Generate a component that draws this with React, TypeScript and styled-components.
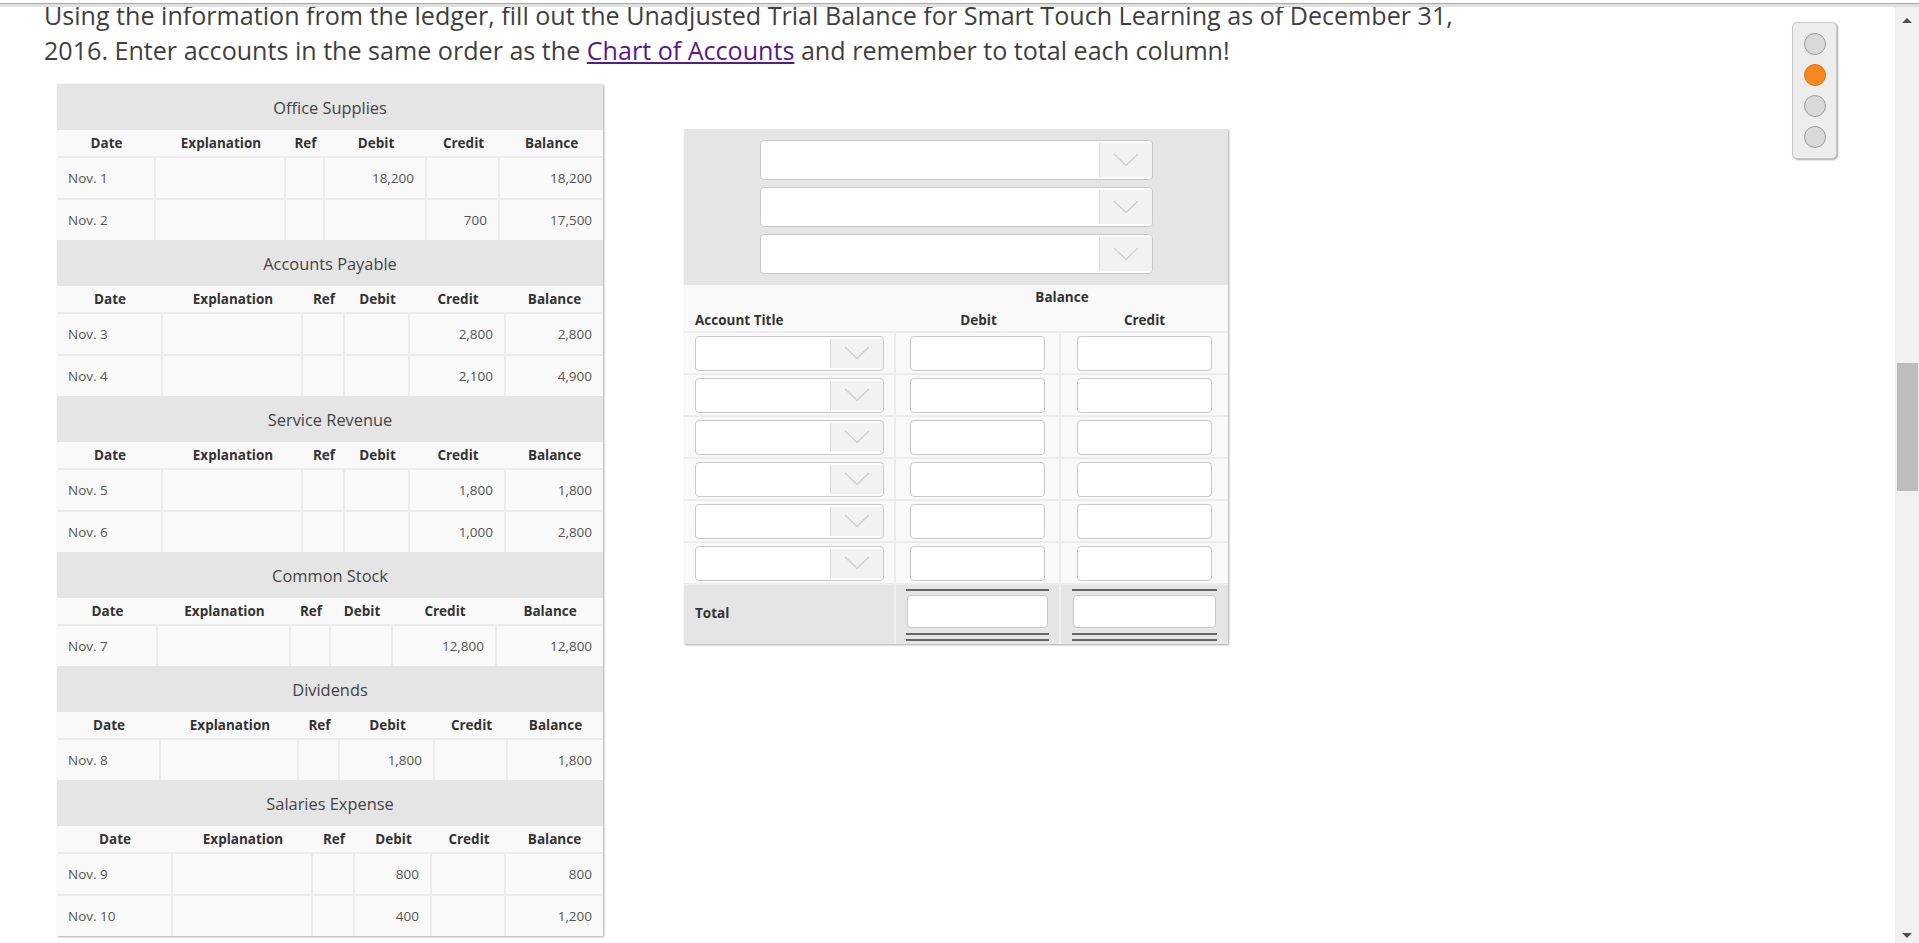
import React from 'react';
import styled, { createGlobalStyle } from 'styled-components';

const GlobalStyle = createGlobalStyle`
  html, body {
    margin: 0;
    padding: 0;
    height: 100%;
    overflow: hidden;
    background: #fff;
  }
  body {
    font-family: 'Open Sans', 'Liberation Sans', sans-serif;
    color: #333;
  }
`;

interface LedgerRow {
  date: string;
  debit?: string;
  credit?: string;
  balance: string;
}

interface LedgerAccount {
  title: string;
  cols: number[];
  rows: LedgerRow[];
}

const ledgers: LedgerAccount[] = [
  {
    title: 'Office Supplies',
    cols: [99, 130, 39, 102, 73, 103],
    rows: [
      { date: 'Nov. 1', debit: '18,200', balance: '18,200' },
      { date: 'Nov. 2', credit: '700', balance: '17,500' },
    ],
  },
  {
    title: 'Accounts Payable',
    cols: [106, 140, 42, 65, 96, 97],
    rows: [
      { date: 'Nov. 3', credit: '2,800', balance: '2,800' },
      { date: 'Nov. 4', credit: '2,100', balance: '4,900' },
    ],
  },
  {
    title: 'Service Revenue',
    cols: [106, 140, 42, 65, 96, 97],
    rows: [
      { date: 'Nov. 5', credit: '1,800', balance: '1,800' },
      { date: 'Nov. 6', credit: '1,000', balance: '2,800' },
    ],
  },
  {
    title: 'Common Stock',
    cols: [101, 133, 40, 62, 104, 106],
    rows: [{ date: 'Nov. 7', credit: '12,800', balance: '12,800' }],
  },
  {
    title: 'Dividends',
    cols: [104, 138, 41, 95, 73, 95],
    rows: [{ date: 'Nov. 8', debit: '1,800', balance: '1,800' }],
  },
  {
    title: 'Salaries Expense',
    cols: [116, 140, 42, 77, 74, 97],
    rows: [
      { date: 'Nov. 9', debit: '800', balance: '800' },
      { date: 'Nov. 10', debit: '400', balance: '1,200' },
    ],
  },
];

const headings = ['Date', 'Explanation', 'Ref', 'Debit', 'Credit', 'Balance'];

const Frame = styled.div`
  position: relative;
  height: 100vh;
  display: flex;
  flex-direction: column;
`;

const TopRule = styled.div`
  flex: none;
  margin-top: 3px;
  height: 3px;
  border-top: 1px solid #a9a9a9;
  background: #e0e0e0;
`;

const Body = styled.div`
  flex: 1;
  min-height: 0;
  display: flex;
`;

const Viewport = styled.div`
  flex: 1;
  min-width: 0;
  overflow: hidden;
`;

// the page is scrolled down a few pixels
const Page = styled.div`
  margin-top: -9px;
  padding-left: 44px;
`;

const Prompt = styled.p`
  margin: 0;
  font-size: 25.1px;
  line-height: 35px;
  color: #3f3f3f;
  white-space: nowrap;

  a {
    color: #551a8b;
    text-decoration: underline;
  }
`;

const Workspace = styled.div`
  display: flex;
  align-items: flex-start;
  gap: 81px;
  margin: 16px 0 0 13px;
`;

const LedgerPanel = styled.div`
  width: 546px;
  background: #f9f9f9;
  box-shadow: 1px 1px 2px rgba(0, 0, 0, 0.35);
`;

const Table = styled.table`
  width: 100%;
  table-layout: fixed;
  border-collapse: separate;
  border-spacing: 0;
  font-size: 13.5px;
`;

const TitleCell = styled.th`
  height: 46px;
  padding: 0;
  background: #e5e5e5;
  font-size: 16.4px;
  font-weight: 400;
  color: #444;
  text-align: center;
`;

const HeadCell = styled.th`
  box-sizing: border-box;
  height: 26px;
  padding: 0;
  background: #f9f9f9;
  font-weight: 700;
  color: #333;
  text-align: center;
  white-space: nowrap;
`;

const Cell = styled.td<{ $num?: boolean; $last?: boolean }>`
  box-sizing: border-box;
  height: 42px;
  padding: 0 11px;
  border-top: 2px solid #ececec;
  border-right: ${(p) => (p.$last ? 'none' : '2px solid #ececec')};
  background: #f9f9f9;
  color: #555;
  text-align: ${(p) => (p.$num ? 'right' : 'left')};
  white-space: nowrap;
`;

const LedgerTable: React.FC<{ account: LedgerAccount }> = ({ account }) => (
  <Table>
    <colgroup>
      {account.cols.map((w, i) => (
        <col key={i} style={{ width: w }} />
      ))}
    </colgroup>
    <thead>
      <tr>
        <TitleCell colSpan={6}>{account.title}</TitleCell>
      </tr>
      <tr>
        {headings.map((h) => (
          <HeadCell key={h}>{h}</HeadCell>
        ))}
      </tr>
    </thead>
    <tbody>
      {account.rows.map((r) => (
        <tr key={r.date}>
          <Cell>{r.date}</Cell>
          <Cell />
          <Cell />
          <Cell $num>{r.debit}</Cell>
          <Cell $num>{r.credit}</Cell>
          <Cell $num $last>
            {r.balance}
          </Cell>
        </tr>
      ))}
    </tbody>
  </Table>
);

const TrialPanel = styled.div`
  width: 544px;
  margin-top: 45px;
  background: #f9f9f9;
  box-shadow: 1px 1px 2px rgba(0, 0, 0, 0.35);
`;

const HeadingBlock = styled.div`
  background: #e5e5e5;
  padding: 11px 0;
  display: flex;
  flex-direction: column;
  align-items: center;
  gap: 7px;
`;

const SelectBox = styled.div<{ $w: number; $h: number }>`
  box-sizing: border-box;
  display: flex;
  width: ${(p) => p.$w}px;
  height: ${(p) => p.$h}px;
  background: #fff;
  border: 1px solid #c9c9c9;
  border-radius: 4px;
  overflow: hidden;
`;

const SelectButton = styled.div`
  margin: 2px 0 2px auto;
  width: 52px;
  background: #f2f2f2;
  border-left: 1px solid #d9d9d9;
  display: flex;
  align-items: center;
  justify-content: center;
`;

const Chevron = () => (
  <svg width="26" height="14" viewBox="0 0 26 14" fill="none">
    <polyline points="1,1 13,12.5 25,1" stroke="#cfcfcf" strokeWidth="1.4" />
  </svg>
);

const Select: React.FC<{ w: number; h: number }> = ({ w, h }) => (
  <SelectBox $w={w} $h={h}>
    <SelectButton>
      <Chevron />
    </SelectButton>
  </SelectBox>
);

const Field = styled.div<{ $w: number; $h: number }>`
  box-sizing: border-box;
  width: ${(p) => p.$w}px;
  height: ${(p) => p.$h}px;
  margin: 0 auto;
  background: #fff;
  border: 1px solid #c9c9c9;
  border-radius: 4px;
`;

const TrialHead = styled.th<{ $h: number; $align?: 'left' | 'center' }>`
  box-sizing: border-box;
  height: ${(p) => p.$h}px;
  padding: 0 ${(p) => (p.$align === 'left' ? '11px' : '0')};
  font-weight: 700;
  color: #333;
  text-align: ${(p) => p.$align || 'center'};
  vertical-align: middle;
`;

const TrialCell = styled.td<{ $last?: boolean; $pad?: boolean }>`
  box-sizing: border-box;
  height: 42px;
  padding: 0 ${(p) => (p.$pad ? '11px' : '0')};
  border-top: 2px solid #ececec;
  border-right: ${(p) => (p.$last ? 'none' : '2px solid #ececec')};
  background: #f9f9f9;
  vertical-align: middle;
`;

const TotalCell = styled.td<{ $last?: boolean; $label?: boolean }>`
  box-sizing: border-box;
  height: 61px;
  padding: ${(p) => (p.$label ? '0 11px 4px' : '0')};
  border-top: 2px solid #ececec;
  border-right: ${(p) => (p.$last ? 'none' : '2px solid #f0f0f0')};
  background: #e5e5e5;
  vertical-align: ${(p) => (p.$label ? 'middle' : 'top')};
  font-weight: 700;
  color: #333;
`;

const TotalStack = styled.div`
  display: flex;
  flex-direction: column;
  align-items: center;
  padding-top: 4px;
`;

const SingleRule = styled.div<{ $w: number }>`
  width: ${(p) => p.$w}px;
  height: 2px;
  background: #666;
  margin-bottom: 4px;
`;

const DoubleRule = styled.div<{ $w: number }>`
  box-sizing: border-box;
  width: ${(p) => p.$w}px;
  height: 8px;
  margin-top: 5px;
  border-top: 2px solid #666;
  border-bottom: 2px solid #666;
`;

const TotalEntry: React.FC<{ rule: number; field: number }> = ({ rule, field }) => (
  <TotalStack>
    <SingleRule $w={rule} />
    <Field $w={field} $h={33} />
    <DoubleRule $w={rule} />
  </TotalStack>
);

const Pager = styled.div`
  position: absolute;
  top: 22px;
  right: 82px;
  width: 45px;
  box-sizing: border-box;
  padding: 10px 0;
  display: flex;
  flex-direction: column;
  align-items: center;
  gap: 9px;
  background: #ededed;
  border: 1px solid #c6c6c6;
  border-radius: 5px;
  box-shadow: 1px 1px 2px rgba(0, 0, 0, 0.35);
`;

const Dot = styled.span<{ $active?: boolean }>`
  box-sizing: border-box;
  width: 22px;
  height: 22px;
  border-radius: 50%;
  background: ${(p) => (p.$active ? '#f5891f' : '#d9d9d9')};
  border: 1px solid ${(p) => (p.$active ? '#dc7414' : '#9c9c9c')};
`;

const Scrollbar = styled.div`
  flex: none;
  width: 24px;
  background: #f0f0f0;
  display: flex;
  flex-direction: column;
`;

const ArrowBox = styled.div<{ $h: number }>`
  flex: none;
  height: ${(p) => p.$h}px;
  display: flex;
  align-items: center;
  justify-content: center;
`;

const Arrow = styled.span<{ $down?: boolean }>`
  width: 0;
  height: 0;
  border-left: 5px solid transparent;
  border-right: 5px solid transparent;
  ${(p) => (p.$down ? 'border-top: 5px solid #505050;' : 'border-bottom: 5px solid #505050;')}
`;

const Track = styled.div`
  flex: 1;
  display: flex;
  flex-direction: column;
  align-items: flex-end;
`;

const Thumb = styled.div`
  margin: 329px 1px 0 0;
  width: 21px;
  height: 128px;
  background: #bdbdbd;
`;

export default function App() {
  return (
    <>
      <GlobalStyle />
      <Frame>
        <TopRule />
        <Body>
          <Viewport>
            <Page>
              <Prompt>
                Using the information from the ledger, fill out the Unadjusted Trial Balance for Smart Touch Learning as of December 31,
                <br />
                2016. Enter accounts in the same order as the <a href="#chart">Chart of Accounts</a> and remember to total each column!
              </Prompt>
              <Workspace>
                <LedgerPanel>
                  {ledgers.map((a) => (
                    <LedgerTable key={a.title} account={a} />
                  ))}
                </LedgerPanel>
                <TrialPanel>
                  <HeadingBlock>
                    <Select w={393} h={40} />
                    <Select w={393} h={40} />
                    <Select w={393} h={40} />
                  </HeadingBlock>
                  <Table>
                    <colgroup>
                      <col style={{ width: 212 }} />
                      <col style={{ width: 165 }} />
                      <col style={{ width: 167 }} />
                    </colgroup>
                    <thead>
                      <tr>
                        <TrialHead $h={24} />
                        <TrialHead $h={24} colSpan={2}>
                          Balance
                        </TrialHead>
                      </tr>
                      <tr>
                        <TrialHead $h={22} $align="left">
                          Account Title
                        </TrialHead>
                        <TrialHead $h={22}>Debit</TrialHead>
                        <TrialHead $h={22}>Credit</TrialHead>
                      </tr>
                    </thead>
                    <tbody>
                      {[0, 1, 2, 3, 4, 5].map((i) => (
                        <tr key={i}>
                          <TrialCell $pad>
                            <Select w={189} h={35} />
                          </TrialCell>
                          <TrialCell>
                            <Field $w={135} $h={35} />
                          </TrialCell>
                          <TrialCell $last>
                            <Field $w={135} $h={35} />
                          </TrialCell>
                        </tr>
                      ))}
                      <tr>
                        <TotalCell $label>Total</TotalCell>
                        <TotalCell>
                          <TotalEntry rule={143} field={141} />
                        </TotalCell>
                        <TotalCell $last>
                          <TotalEntry rule={145} field={143} />
                        </TotalCell>
                      </tr>
                    </tbody>
                  </Table>
                </TrialPanel>
              </Workspace>
            </Page>
          </Viewport>
          <Scrollbar>
            <ArrowBox $h={27}>
              <Arrow />
            </ArrowBox>
            <Track>
              <Thumb />
            </Track>
            <ArrowBox $h={16}>
              <Arrow $down />
            </ArrowBox>
          </Scrollbar>
        </Body>
        <Pager>
          <Dot />
          <Dot $active />
          <Dot />
          <Dot />
        </Pager>
      </Frame>
    </>
  );
}
